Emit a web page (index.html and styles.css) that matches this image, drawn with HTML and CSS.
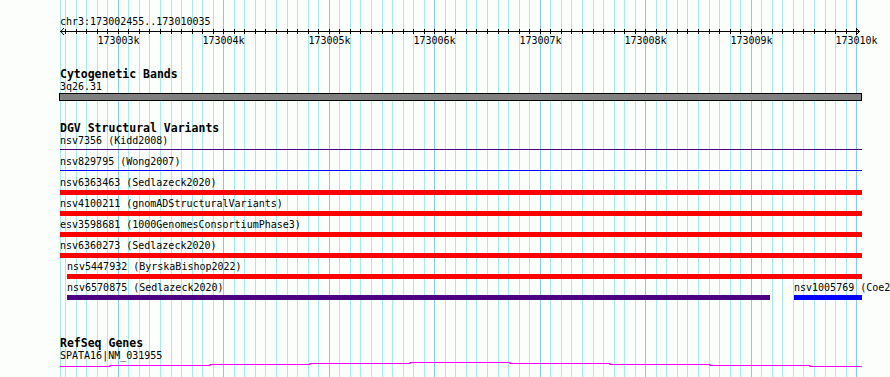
FILE: index.html
```html
<!DOCTYPE html>
<html lang="en">
  <head>
    <meta charset="UTF-8" />
    <title>Genome browser - chr3:173002455..173010035</title>
    <link rel="stylesheet" href="styles.css">
  </head>
  <body>
    <div class="view">
      <!-- grid lines, every 100bp, major every 1kb -->
      <svg class="grid" width="890" height="377">
        <path class="grid-minor" d="M60.5 0V377M65.5 0V377M76.5 0V377M86.5 0V377M97.5 0V377M107.5 0V377M128.5 0V377M139.5 0V377M149.5 0V377M160.5 0V377M171.5 0V377M181.5 0V377M192.5 0V377M202.5 0V377M213.5 0V377M234.5 0V377M244.5 0V377M255.5 0V377M265.5 0V377M276.5 0V377M287.5 0V377M297.5 0V377M308.5 0V377M318.5 0V377M339.5 0V377M350.5 0V377M360.5 0V377M371.5 0V377M382.5 0V377M392.5 0V377M403.5 0V377M413.5 0V377M424.5 0V377M445.5 0V377M455.5 0V377M466.5 0V377M476.5 0V377M487.5 0V377M498.5 0V377M508.5 0V377M519.5 0V377M529.5 0V377M550.5 0V377M561.5 0V377M571.5 0V377M582.5 0V377M593.5 0V377M603.5 0V377M614.5 0V377M624.5 0V377M635.5 0V377M656.5 0V377M666.5 0V377M677.5 0V377M687.5 0V377M698.5 0V377M709.5 0V377M719.5 0V377M730.5 0V377M740.5 0V377M761.5 0V377M772.5 0V377M782.5 0V377M793.5 0V377M803.5 0V377M814.5 0V377M825.5 0V377M835.5 0V377M846.5 0V377" />
        <path class="grid-major" d="M118.5 0V377M223.5 0V377M329.5 0V377M434.5 0V377M540.5 0V377M645.5 0V377M751.5 0V377M856.5 0V377" />
      </svg>

      <!-- Ruler -->
      <svg class="ruler" width="890" height="50">
        <text class="locus" x="60" y="25">chr3:173002455..173010035</text>
        <path class="axis" d="M60 31.5H860" />
        <path class="axis" d="M64 28L60.7 31.5L64 35M856 28L859.5 31.5L856 35" />
        <path class="axis" d="M65.5 29V34M76.5 29V34M86.5 29V34M97.5 29V34M107.5 29V34M118.5 29V34M128.5 29V34M139.5 29V34M149.5 29V34M160.5 29V34M171.5 29V34M181.5 29V34M192.5 29V34M202.5 29V34M213.5 29V34M223.5 29V34M234.5 29V34M244.5 29V34M255.5 29V34M265.5 29V34M276.5 29V34M287.5 29V34M297.5 29V34M308.5 29V34M318.5 29V34M329.5 29V34M339.5 29V34M350.5 29V34M360.5 29V34M371.5 29V34M382.5 29V34M392.5 29V34M403.5 29V34M413.5 29V34M424.5 29V34M434.5 29V34M445.5 29V34M455.5 29V34M466.5 29V34M476.5 29V34M487.5 29V34M498.5 29V34M508.5 29V34M519.5 29V34M529.5 29V34M540.5 29V34M550.5 29V34M561.5 29V34M571.5 29V34M582.5 29V34M593.5 29V34M603.5 29V34M614.5 29V34M624.5 29V34M635.5 29V34M645.5 29V34M656.5 29V34M666.5 29V34M677.5 29V34M687.5 29V34M698.5 29V34M709.5 29V34M719.5 29V34M730.5 29V34M740.5 29V34M751.5 29V34M761.5 29V34M772.5 29V34M782.5 29V34M793.5 29V34M803.5 29V34M814.5 29V34M825.5 29V34M835.5 29V34M846.5 29V34M856.5 29V34" />
        <text class="tick-label" x="118.5" y="44">173003k</text>
        <text class="tick-label" x="223.5" y="44">173004k</text>
        <text class="tick-label" x="329.5" y="44">173005k</text>
        <text class="tick-label" x="434.5" y="44">173006k</text>
        <text class="tick-label" x="540.5" y="44">173007k</text>
        <text class="tick-label" x="645.5" y="44">173008k</text>
        <text class="tick-label" x="751.5" y="44">173009k</text>
        <text class="tick-label" x="856.5" y="44">173010k</text>
      </svg>

      <!-- Cytogenetic Bands -->
      <section class="track track-cyto">
        <h2 class="track-title">Cytogenetic Bands</h2>
        <div class="feature-label">3q26.31</div>
        <div class="band"></div>
      </section>

      <!-- DGV -->
      <section class="track track-dgv">
        <h2 class="track-title">DGV Structural Variants</h2>
        <div class="feature-row">
          <div class="feature" style="width: 802px">
            <div class="feature-label">nsv7356 (Kidd2008)</div>
            <div class="line line-indigo"></div>
          </div>
        </div>
        <div class="feature-row">
          <div class="feature" style="width: 802px">
            <div class="feature-label">nsv829795 (Wong2007)</div>
            <div class="line line-blue"></div>
          </div>
        </div>
        <div class="feature-row">
          <div class="feature" style="width: 802px">
            <div class="feature-label">nsv6363463 (Sedlazeck2020)</div>
            <div class="bar bar-red"></div>
          </div>
        </div>
        <div class="feature-row">
          <div class="feature" style="width: 802px">
            <div class="feature-label">nsv4100211 (gnomADStructuralVariants)</div>
            <div class="bar bar-red"></div>
          </div>
        </div>
        <div class="feature-row">
          <div class="feature" style="width: 802px">
            <div class="feature-label">esv3598681 (1000GenomesConsortiumPhase3)</div>
            <div class="bar bar-red"></div>
          </div>
        </div>
        <div class="feature-row">
          <div class="feature" style="width: 802px">
            <div class="feature-label">nsv6360273 (Sedlazeck2020)</div>
            <div class="bar bar-red"></div>
          </div>
        </div>
        <div class="feature-row">
          <div class="feature" style="margin-left: 7px; width: 795px">
            <div class="feature-label">nsv5447932 (ByrskaBishop2022)</div>
            <div class="bar bar-red"></div>
          </div>
        </div>
        <div class="feature-row">
          <div class="feature" style="margin-left: 7px; width: 703px">
            <div class="feature-label">nsv6570875 (Sedlazeck2020)</div>
            <div class="bar bar-indigo"></div>
          </div>
          <div class="feature" style="margin-left: 24px; width: 68px">
            <div class="feature-label">nsv1005769 (Coe2014)</div>
            <div class="bar bar-blue"></div>
          </div>
        </div>
      </section>

      <!-- RefSeq -->
      <section class="track track-refseq">
        <h2 class="track-title">RefSeq Genes</h2>
        <div class="feature-label">SPATA16|NM_031955</div>
        <svg class="gene" width="830" height="8">
          <path d="M0 4.5H50V3.5H150V2.5H250V1.5H350V0.5H450V1.5H550V2.5H650V3.5H750V4.5H802" />
        </svg>
      </section>
    </div>
  </body>
</html>
```

FILE: styles.css
```css
body {
  margin: 0;
  padding: 0;
  background-color: #fbfefb;
  font-family: "DejaVu Sans Mono", monospace;
  color: #000;
}
.view {
  position: relative;
  width: 890px;
  height: 377px;
  overflow: hidden;
}
.grid {
  position: absolute;
  top: 0;
  left: 0;
}
.grid-minor {
  stroke: #a8eaea;
  stroke-width: 1;
}
.grid-major {
  stroke: #88c8ea;
  stroke-width: 1;
}
.ruler {
  display: block;
  position: relative;
}
.axis {
  stroke: #000;
  stroke-width: 1;
  fill: none;
}
.locus,
.tick-label {
  font-family: "DejaVu Sans Mono", monospace;
  font-size: 10px;
  fill: #000;
}
.tick-label {
  text-anchor: middle;
}
.track {
  position: relative;
  z-index: 1;
  padding-left: 60px;
}
.track-cyto {
  margin-top: 18px;
}
.track-dgv {
  margin-top: 21px;
}
.track-refseq {
  margin-top: 34px;
}
.track-title {
  margin: 0;
  font-size: 11.5px;
  line-height: 13px;
  font-weight: bold;
  white-space: nowrap;
}
.feature-label {
  font-size: 10px;
  line-height: 12px;
  white-space: nowrap;
}
.band {
  margin-left: -1px;
  width: 801px;
  height: 6px;
  border: 1px solid #000;
  background-color: #808080;
}
.feature-row {
  display: flex;
  height: 21px;
}
.feature {
  flex: none;
}
.line {
  margin-top: 2px;
  height: 1px;
}
.bar {
  margin-top: 1px;
  height: 5px;
}
.line-indigo,
.bar-indigo {
  background-color: #4b0082;
}
.line-blue,
.bar-blue {
  background-color: #0000ff;
}
.bar-red {
  background-color: #ff0000;
}
.gene {
  display: block;
}
.gene path {
  stroke: #ff00ff;
  stroke-width: 1.2;
  fill: none;
}
```
